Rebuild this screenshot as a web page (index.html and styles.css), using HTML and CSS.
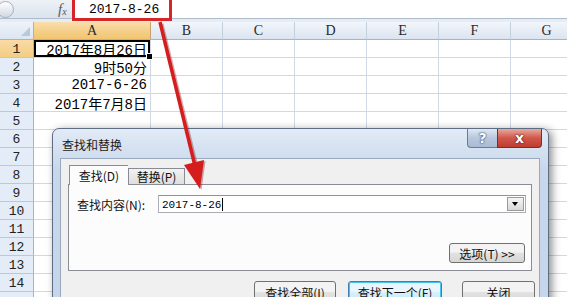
FILE: index.html
```html
<!DOCTYPE html>
<html>
<head>
<meta charset="utf-8">
<link rel="stylesheet" href="styles.css">
</head>
<body>
<div class="x-app">

    <!-- formula bar -->
    <div class="x-fbar">
        <div class="x-namebox"><span class="x-knob"></span></div>
        <div class="x-fx">f<span class="x-fxsub">x</span></div>
        <div class="x-formula">2017-8-26</div>
    </div>

    <!-- sheet -->
    <div class="x-sheet">
        <div class="x-corner"></div>
        <div class="x-colhead x-on">A</div>
        <div class="x-colhead">B</div>
        <div class="x-colhead">C</div>
        <div class="x-colhead">D</div>
        <div class="x-colhead">E</div>
        <div class="x-colhead">F</div>
        <div class="x-colhead">G</div>

        <div class="x-rowhead x-on">1</div>
        <div class="x-cell x-sel">2017年8月26日</div><div class="x-cell"></div><div class="x-cell"></div><div class="x-cell"></div><div class="x-cell"></div><div class="x-cell"></div><div class="x-cell"></div>
        <div class="x-rowhead">2</div>
        <div class="x-cell">9时50分</div><div class="x-cell"></div><div class="x-cell"></div><div class="x-cell"></div><div class="x-cell"></div><div class="x-cell"></div><div class="x-cell"></div>
        <div class="x-rowhead">3</div>
        <div class="x-cell">2017-6-26</div><div class="x-cell"></div><div class="x-cell"></div><div class="x-cell"></div><div class="x-cell"></div><div class="x-cell"></div><div class="x-cell"></div>
        <div class="x-rowhead">4</div>
        <div class="x-cell">2017年7月8日</div><div class="x-cell"></div><div class="x-cell"></div><div class="x-cell"></div><div class="x-cell"></div><div class="x-cell"></div><div class="x-cell"></div>
        <div class="x-rowhead">5</div>
        <div class="x-cell"></div><div class="x-cell"></div><div class="x-cell"></div><div class="x-cell"></div><div class="x-cell"></div><div class="x-cell"></div><div class="x-cell"></div>
        <div class="x-rowhead">6</div>
        <div class="x-cell"></div><div class="x-cell"></div><div class="x-cell"></div><div class="x-cell"></div><div class="x-cell"></div><div class="x-cell"></div><div class="x-cell"></div>
        <div class="x-rowhead">7</div>
        <div class="x-cell"></div><div class="x-cell"></div><div class="x-cell"></div><div class="x-cell"></div><div class="x-cell"></div><div class="x-cell"></div><div class="x-cell"></div>
        <div class="x-rowhead">8</div>
        <div class="x-cell"></div><div class="x-cell"></div><div class="x-cell"></div><div class="x-cell"></div><div class="x-cell"></div><div class="x-cell"></div><div class="x-cell"></div>
        <div class="x-rowhead">9</div>
        <div class="x-cell"></div><div class="x-cell"></div><div class="x-cell"></div><div class="x-cell"></div><div class="x-cell"></div><div class="x-cell"></div><div class="x-cell"></div>
        <div class="x-rowhead">10</div>
        <div class="x-cell"></div><div class="x-cell"></div><div class="x-cell"></div><div class="x-cell"></div><div class="x-cell"></div><div class="x-cell"></div><div class="x-cell"></div>
        <div class="x-rowhead">11</div>
        <div class="x-cell"></div><div class="x-cell"></div><div class="x-cell"></div><div class="x-cell"></div><div class="x-cell"></div><div class="x-cell"></div><div class="x-cell"></div>
        <div class="x-rowhead">12</div>
        <div class="x-cell"></div><div class="x-cell"></div><div class="x-cell"></div><div class="x-cell"></div><div class="x-cell"></div><div class="x-cell"></div><div class="x-cell"></div>
        <div class="x-rowhead">13</div>
        <div class="x-cell"></div><div class="x-cell"></div><div class="x-cell"></div><div class="x-cell"></div><div class="x-cell"></div><div class="x-cell"></div><div class="x-cell"></div>
        <div class="x-rowhead">14</div>
        <div class="x-cell"></div><div class="x-cell"></div><div class="x-cell"></div><div class="x-cell"></div><div class="x-cell"></div><div class="x-cell"></div><div class="x-cell"></div>
        <div class="x-rowhead"></div>
        <div class="x-cell"></div><div class="x-cell"></div><div class="x-cell"></div><div class="x-cell"></div><div class="x-cell"></div><div class="x-cell"></div><div class="x-cell"></div>
    </div>

    <!-- annotation box round the formula -->
    <div class="x-redbox"></div>

    <!-- find & replace dialog -->
    <div class="x-dialog">
        <div class="x-dtitle">
            <span class="x-dname">查找和替换</span>
            <div class="x-capbtns">
                <span class="x-help">?</span>
                <span class="x-close">x</span>
            </div>
        </div>
        <div class="x-dbody">
            <div class="x-tabs">
                <div class="x-tab x-tab-on">查找(D)</div>
                <div class="x-tab">替换(P)</div>
            </div>
            <div class="x-panel">
                <div class="x-findrow">
                    <span class="x-label">查找内容(N):</span>
                    <div class="x-combo">
                        <span class="x-ctext">2017-8-26</span>
                        <span class="x-drop"></span>
                    </div>
                </div>
                <div class="x-optrow">
                    <div class="x-btn x-opt">选项(T) &gt;&gt;</div>
                </div>
            </div>
            <div class="x-actions">
                <div class="x-btn x-all">查找全部(I)</div>
                <div class="x-btn x-next">查找下一个(F)</div>
                <div class="x-btn x-shut">关闭</div>
            </div>
        </div>
    </div>

    <!-- red arrow -->
    <svg class="x-arrow" width="567" height="297" viewBox="0 0 567 297">
        <line x1="160" y1="23" x2="195" y2="166" stroke="#7a1010" stroke-opacity="0.35" stroke-width="4" transform="translate(1.5 1)"/>
        <polygon points="184,165 204,160 200,189" fill="#7a1010" fill-opacity="0.35" transform="translate(1.5 1)"/>
        <line x1="160" y1="22" x2="195" y2="166" stroke="#d51d1d" stroke-width="3.5"/>
        <polygon points="184,165 204,160 200,189" fill="#d51d1d"/>
    </svg>
</div>
</body>
</html>
```

FILE: styles.css
```css
body {
    margin: 0;
    background: #ffffff;
    font-family: "Noto Sans CJK SC", sans-serif;
}

.x-app {
    position: relative;
    width: 567px;
    height: 297px;
    overflow: hidden;
    background: #e6ecf4;
}

/* formula bar */

.x-fbar {
    display: flex;
    height: 18px;
    border-bottom: 1px solid #aebbcc;
    background: linear-gradient(#eef2f7, #dbe3ee);
    margin-bottom: 3px;
}

.x-namebox {
    width: 58px;
    display: flex;
    align-items: center;
}

.x-knob {
    width: 15px;
    height: 15px;
    margin-left: -3px;
    border-radius: 50%;
    border: 1px solid #a6afbc;
    background: linear-gradient(#fdfdfe, #d3dae3);
}

.x-fx {
    width: 16px;
    display: flex;
    align-items: center;
    font: italic 15px "Liberation Serif", serif;
    color: #5a5a5a;
}

.x-fxsub {
    font-size: 10px;
    margin-top: 5px;
}

.x-formula {
    flex: 1;
    display: flex;
    align-items: center;
    padding-left: 14px;
    background: #ffffff;
    border-left: 1px solid #b8c3d1;
    font: 13px "Liberation Mono", monospace;
    color: #000;
}

/* sheet */

.x-sheet {
    display: grid;
    grid-template-columns: 34px 117px repeat(6, 72px);
    grid-auto-rows: 18px;
    background: #ffffff;
}

.x-sheet > div {
    box-sizing: border-box;
    display: flex;
    align-items: center;
}

.x-corner {
    position: relative;
    background: linear-gradient(#eef3f9, #dce5f1);
    border-right: 1px solid #9eb6ce;
    border-bottom: 1px solid #9eb6ce;
}

.x-corner::after {
    content: "";
    position: absolute;
    right: 3px;
    bottom: 3px;
    border-left: 9px solid transparent;
    border-bottom: 9px solid #b9c9dc;
}

.x-colhead {
    justify-content: center;
    background: linear-gradient(#f3f6fb, #dbe4f0);
    border-right: 1px solid #c4cfdc;
    border-bottom: 1px solid #9eb6ce;
    font: 14px "Liberation Serif", serif;
    color: #2a2a2a;
}

.x-colhead.x-on {
    background: linear-gradient(#f9ddab, #f1c46d);
    border-right-color: #c6a26a;
}

.x-rowhead {
    justify-content: center;
    padding-top: 1px;
    background: #e4ecf7;
    border-right: 1px solid #9eb6ce;
    border-bottom: 1px solid #b8c9dc;
    font: 13px "Liberation Mono", monospace;
    color: #222;
}

.x-rowhead.x-on {
    background: linear-gradient(#f9dba5, #f4cd84);
}

.x-cell {
    justify-content: flex-end;
    padding-right: 3px;
    padding-top: 1px;
    border-right: 1px solid #d0d7e5;
    border-bottom: 1px solid #d0d7e5;
    font: 14px "Liberation Mono", "Noto Sans CJK SC", monospace;
    color: #000;
    white-space: nowrap;
}

.x-cell.x-sel {
    position: relative;
    box-shadow: inset 0 0 0 2px #000;
}

.x-cell.x-sel::after {
    content: "";
    position: absolute;
    right: -3px;
    bottom: -3px;
    width: 5px;
    height: 5px;
    background: #000;
    border: 1px solid #fff;
}

.x-redbox {
    position: absolute;
    left: 72px;
    top: -3px;
    width: 100px;
    height: 24px;
    box-sizing: border-box;
    border: 3px solid #d6262a;
}

/* dialog */

.x-dialog {
    position: absolute;
    left: 52px;
    top: 128px;
    width: 497px;
    height: 180px;
    box-sizing: border-box;
    display: flex;
    flex-direction: column;
    border: 1px solid #5d6d84;
    border-radius: 7px 7px 0 0;
    background: linear-gradient(#e2ebf6, #c8d8ec 40px, #c6d6ea);
    box-shadow: 3px 2px 9px rgba(0, 0, 0, 0.45);
}

.x-dtitle {
    display: flex;
    height: 29px;
    padding-left: 9px;
    padding-right: 6px;
}

.x-dname {
    align-self: center;
    margin-top: 2px;
    font-size: 12px;
    color: #1a1a1a;
}

.x-capbtns {
    display: flex;
    margin-left: auto;
    height: 19px;
}

.x-help,
.x-close {
    display: flex;
    align-items: center;
    justify-content: center;
    box-sizing: border-box;
    height: 19px;
    font: bold 14px "DejaVu Sans", sans-serif;
    color: #fff;
}

.x-help {
    width: 30px;
    border: 1px solid #6c7b91;
    border-top: none;
    border-right: none;
    border-radius: 0 0 0 4px;
    background: linear-gradient(#dfe8f3, #b7c7dc 50%, #a9bbd3);
    text-shadow: 0 0 2px #2a3b55, 0 0 1px #2a3b55;
}

.x-close {
    width: 45px;
    border: 1px solid #6a3530;
    border-top: none;
    border-radius: 0 0 4px 0;
    background: linear-gradient(#e9a99e, #d0574b 50%, #c13b2f);
    text-shadow: 0 0 2px #5a1510, 0 0 1px #5a1510;
}

.x-dbody {
    flex: 1;
    margin: 0 8px 0 7px;
    background: #f0f0f0;
    border: 1px solid #99a9be;
    border-bottom: none;
}

.x-tabs {
    display: flex;
    align-items: flex-end;
    margin: 6px 0 0 8px;
    position: relative;
    z-index: 1;
}

.x-tab {
    box-sizing: border-box;
    display: flex;
    align-items: center;
    justify-content: center;
    width: 57px;
    height: 16px;
    border: 1px solid #898c95;
    border-bottom: none;
    background: linear-gradient(#f2f2f2, #dedede);
    font-size: 12px;
    color: #111;
}

.x-tab.x-tab-on {
    width: 59px;
    height: 20px;
    margin-bottom: -1px;
    border-right: none;
    background: #fcfcfc;
}

.x-panel {
    box-sizing: border-box;
    display: flex;
    flex-direction: column;
    justify-content: space-between;
    height: 87px;
    margin: 0 7px 0 7px;
    padding: 10px 5px 7px 8px;
    background: #fcfcfc;
    border: 1px solid #898c95;
}

.x-findrow {
    display: flex;
    align-items: center;
}

.x-label {
    width: 81px;
    font-size: 12px;
    color: #111;
}

.x-combo {
    flex: 1;
    display: flex;
    align-items: center;
    height: 18px;
    box-sizing: border-box;
    border: 1px solid #abadb3;
    border-top-color: #8e9299;
    background: #fff;
    padding: 0 1px 0 3px;
}

.x-ctext {
    flex: 1;
    font: 11px "Liberation Mono", monospace;
    color: #000;
}

.x-ctext::after {
    content: "";
    display: inline-block;
    width: 1px;
    height: 13px;
    margin-left: 1px;
    vertical-align: -3px;
    background: #000;
}

.x-drop {
    position: relative;
    width: 17px;
    height: 14px;
    box-sizing: border-box;
    border: 1px solid #9a9a9a;
    background: linear-gradient(#f5f5f5, #d8d8d8);
}

.x-drop::after {
    content: "";
    position: absolute;
    left: 4px;
    top: 4px;
    border-left: 3.5px solid transparent;
    border-right: 3.5px solid transparent;
    border-top: 4px solid #000;
}

.x-optrow {
    display: flex;
    justify-content: flex-end;
    padding-right: 1px;
}

.x-btn {
    box-sizing: border-box;
    display: flex;
    align-items: center;
    justify-content: center;
    height: 23px;
    border: 1px solid #707070;
    border-radius: 3px;
    background: linear-gradient(#f3f3f3 45%, #e2e2e2 50%, #d6d6d6);
    font-size: 12px;
    color: #111;
    white-space: nowrap;
}

.x-btn.x-opt {
    width: 76px;
    height: 20px;
}

.x-actions {
    display: flex;
    justify-content: flex-end;
    margin-top: 10px;
    padding-right: 4px;
}

.x-all {
    width: 82px;
}

.x-next {
    width: 94px;
    margin-left: 12px;
    border-color: #3c7fb1;
    background: linear-gradient(#eaf6fd 45%, #d9f0fc 50%, #bee6fd);
    box-shadow: inset 0 0 0 1px #48c0f0;
}

.x-shut {
    width: 73px;
    margin-left: 20px;
}

.x-arrow {
    position: absolute;
    left: 0;
    top: 0;
    pointer-events: none;
}
```
